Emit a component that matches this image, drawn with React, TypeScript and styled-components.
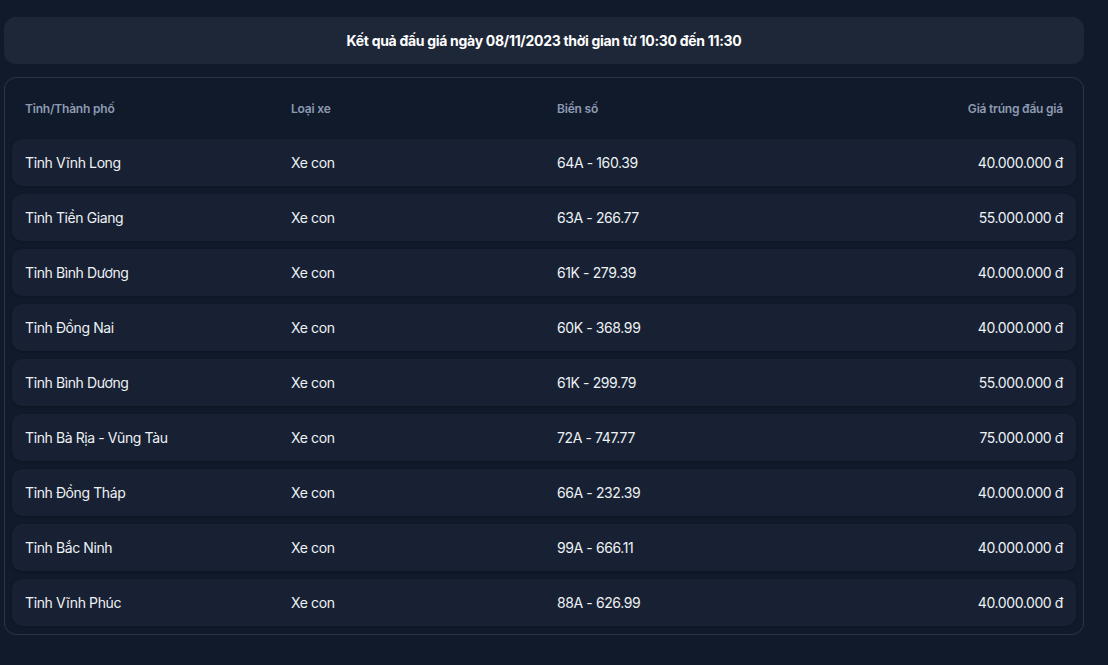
import React from "react"
import styled, { createGlobalStyle } from "styled-components"

const GlobalStyle = createGlobalStyle`
  body {
    margin: 0;
    background-color: #111a2b;
    font-family: Inter, "Noto Sans", sans-serif;
  }
`

const Page = styled.main`
  width: 1080px;
  padding: 17px 0 0 4px;
`

const TitleBar = styled.div`
  display: flex;
  justify-content: center;
  align-items: center;
  height: 47px;
  border-radius: 12px;
  background-color: #1e2738;
`

const Title = styled.h1`
  margin: 0 0 1px;
  color: #ffffff;
  font-size: 14px;
  font-weight: 700;
  letter-spacing: -0.3px;
`

const TableBox = styled.section`
  margin-top: 13px;
  padding: 0 7px 8px;
  border: 1px solid #2a3446;
  border-radius: 12px;
`

const Grid = styled.div`
  display: grid;
  grid-template-columns: repeat(4, 1fr);
  align-items: center;
`

const HeadRow = styled(Grid)`
  height: 61px;
  padding-bottom: 1px;
  box-sizing: border-box;
`

const HeadCell = styled.div<{ $right?: boolean }>`
  padding: 0 13px;
  color: #8d9bb2;
  font-size: 12px;
  font-weight: 600;
  letter-spacing: -0.2px;
  text-align: ${({ $right }) => ($right ? "right" : "left")};
`

const Rows = styled.div`
  display: flex;
  flex-direction: column;
  gap: 8px;
`

const Row = styled(Grid)`
  height: 47px;
  padding-bottom: 1px;
  box-sizing: border-box;
  border-radius: 10px;
  background-color: #172133;
  box-shadow: 0 1px 3px rgba(0, 0, 0, 0.25);
`

const Cell = styled.div<{ $right?: boolean }>`
  padding: 0 13px;
  color: #eef1f5;
  font-size: 14px;
  font-weight: 400;
  letter-spacing: -0.4px;
  text-align: ${({ $right }) => ($right ? "right" : "left")};
`

const results = [
  ["Tỉnh Vĩnh Long", "64A - 160.39", "40.000.000 đ"],
  ["Tỉnh Tiền Giang", "63A - 266.77", "55.000.000 đ"],
  ["Tỉnh Bình Dương", "61K - 279.39", "40.000.000 đ"],
  ["Tỉnh Đồng Nai", "60K - 368.99", "40.000.000 đ"],
  ["Tỉnh Bình Dương", "61K - 299.79", "55.000.000 đ"],
  ["Tỉnh Bà Rịa - Vũng Tàu", "72A - 747.77", "75.000.000 đ"],
  ["Tỉnh Đồng Tháp", "66A - 232.39", "40.000.000 đ"],
  ["Tỉnh Bắc Ninh", "99A - 666.11", "40.000.000 đ"],
  ["Tỉnh Vĩnh Phúc", "88A - 626.99", "40.000.000 đ"],
]

const App = () => {
  return (
    <>
      <GlobalStyle />
      <Page>
        <TitleBar>
          <Title>Kết quả đấu giá ngày 08/11/2023 thời gian từ 10:30 đến 11:30</Title>
        </TitleBar>
        <TableBox>
          <HeadRow>
            <HeadCell>Tỉnh/Thành phố</HeadCell>
            <HeadCell>Loại xe</HeadCell>
            <HeadCell>Biển số</HeadCell>
            <HeadCell $right>Giá trúng đấu giá</HeadCell>
          </HeadRow>
          <Rows>
            {results.map(([province, plate, price], i) => (
              <Row key={i}>
                <Cell>{province}</Cell>
                <Cell>Xe con</Cell>
                <Cell>{plate}</Cell>
                <Cell $right>{price}</Cell>
              </Row>
            ))}
          </Rows>
        </TableBox>
      </Page>
    </>
  )
}

export default App
